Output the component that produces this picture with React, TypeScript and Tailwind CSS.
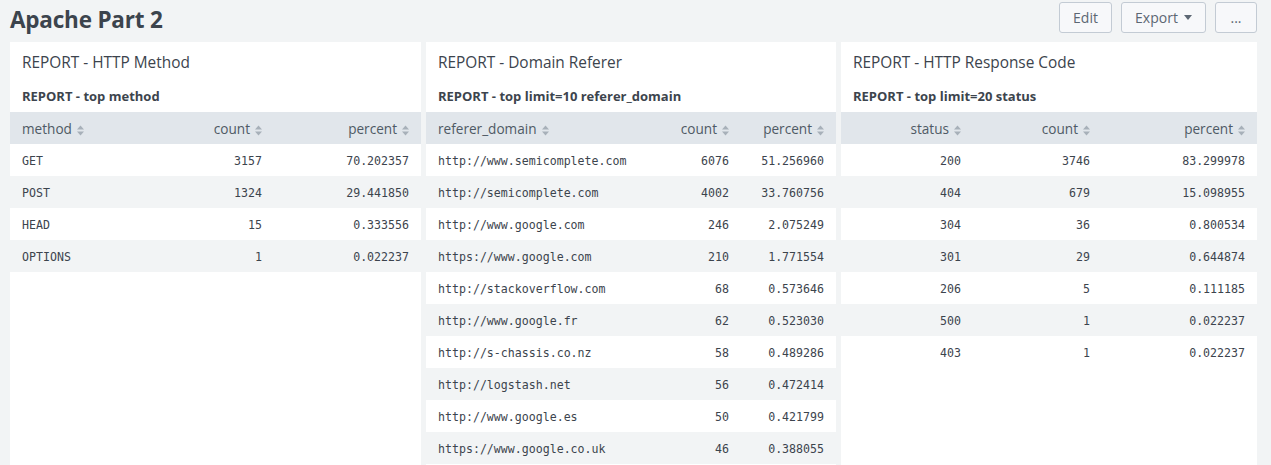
import React from "react";

type Col = { key: string; label: string; align: "left" | "right"; width: string };
type Panel = { title: string; search: string; width: string; cols: Col[]; rows: string[][] };

const panels: Panel[] = [
  {
    title: "REPORT - HTTP Method",
    search: "REPORT - top method",
    width: "w-[411px]",
    cols: [
      { key: "method", label: "method", align: "left", width: "w-[136px]" },
      { key: "count", label: "count", align: "right", width: "w-[128px]" },
      { key: "percent", label: "percent", align: "right", width: "w-auto" },
    ],
    rows: [
      ["GET", "3157", "70.202357"],
      ["POST", "1324", "29.441850"],
      ["HEAD", "15", "0.333556"],
      ["OPTIONS", "1", "0.022237"],
    ],
  },
  {
    title: "REPORT - Domain Referer",
    search: "REPORT - top limit=10 referer_domain",
    width: "w-[410px]",
    cols: [
      { key: "referer_domain", label: "referer_domain", align: "left", width: "w-auto" },
      { key: "count", label: "count", align: "right", width: "w-[80px]" },
      { key: "percent", label: "percent", align: "right", width: "w-[95px]" },
    ],
    rows: [
      ["http://www.semicomplete.com", "6076", "51.256960"],
      ["http://semicomplete.com", "4002", "33.760756"],
      ["http://www.google.com", "246", "2.075249"],
      ["https://www.google.com", "210", "1.771554"],
      ["http://stackoverflow.com", "68", "0.573646"],
      ["http://www.google.fr", "62", "0.523030"],
      ["http://s-chassis.co.nz", "58", "0.489286"],
      ["http://logstash.net", "56", "0.472414"],
      ["http://www.google.es", "50", "0.421799"],
      ["https://www.google.co.uk", "46", "0.388055"],
    ],
  },
  {
    title: "REPORT - HTTP Response Code",
    search: "REPORT - top limit=20 status",
    width: "w-[416px]",
    cols: [
      { key: "status", label: "status", align: "right", width: "w-[132px]" },
      { key: "count", label: "count", align: "right", width: "w-[129px]" },
      { key: "percent", label: "percent", align: "right", width: "w-auto" },
    ],
    rows: [
      ["200", "3746", "83.299978"],
      ["404", "679", "15.098955"],
      ["304", "36", "0.800534"],
      ["301", "29", "0.644874"],
      ["206", "5", "0.111185"],
      ["500", "1", "0.022237"],
      ["403", "1", "0.022237"],
    ],
  },
];

const SortIcon = () => (
  <svg width="7" height="11" viewBox="0 0 7 11" className="ml-[5px] inline-block fill-[#a7b0b9]">
    <path d="M3.5 0.5 L7 4.5 L0 4.5 Z" />
    <path d="M0 6.5 L7 6.5 L3.5 10.5 Z" />
  </svg>
);

const ReportPanel = ({ panel }: { panel: Panel }) => (
  <div className={`${panel.width} shrink-0 bg-white`}>
    <div className="px-3 pt-[11px] text-[15.4px] leading-[20px] text-[#3c444d]">{panel.title}</div>
    <div className="px-3 mt-[15px] text-[13px] leading-[16px] font-bold text-[#3c444d]">
      {panel.search}
    </div>
    <table className="mt-[8px] w-full table-fixed border-collapse">
      <colgroup>
        {panel.cols.map((c) => (
          <col key={c.key} className={c.width} />
        ))}
      </colgroup>
      <thead>
        <tr className="h-[32px] bg-[#e1e6eb]">
          {panel.cols.map((c) => (
            <th
              key={c.key}
              className={`px-3 pt-[2px] font-normal text-[13.6px] text-[#4f5a65] whitespace-nowrap ${
                c.align === "right" ? "text-right" : "text-left"
              }`}
            >
              {c.label}
              <SortIcon />
            </th>
          ))}
        </tr>
      </thead>
      <tbody>
        {panel.rows.map((r, i) => (
          <tr key={i} className={`h-[32px] ${i % 2 === 1 ? "bg-[#f2f4f5]" : "bg-white"}`}>
            {r.map((v, j) => (
              <td
                key={j}
                className={`px-3 pt-[4px] font-['DejaVu_Sans_Mono',monospace] text-[11.6px] text-[#3c444d] whitespace-nowrap ${
                  panel.cols[j].align === "right" ? "text-right" : "text-left"
                }`}
              >
                {v}
              </td>
            ))}
          </tr>
        ))}
      </tbody>
    </table>
  </div>
);

export default function App() {
  return (
    <div className="w-[1271px] h-[465px] overflow-hidden bg-[#f2f4f5] font-['Open_Sans',sans-serif]">
      <div className="h-[42px] flex items-start justify-between pl-[10px] pr-[14px]">
        <h1 className="mt-[5px] text-[22.5px] leading-[30px] font-bold text-[#3c444d] tracking-[-0.2px]">
          Apache Part 2
        </h1>
        <div className="flex gap-[9px] mt-[2px]">
          <button className="h-[31px] w-[53px] rounded-[3px] border border-[#c3cbd4] bg-[#f7f8fa] text-[14px] text-[#5c6773]">
            Edit
          </button>
          <button className="h-[31px] w-[85px] rounded-[3px] border border-[#c3cbd4] bg-[#f7f8fa] text-[14px] text-[#5c6773] flex items-center justify-center gap-[6px]">
            Export
            <svg width="8" height="5" viewBox="0 0 8 5" className="fill-[#5c6773]">
              <path d="M0 0 L8 0 L4 5 Z" />
            </svg>
          </button>
          <button className="h-[31px] w-[42px] rounded-[3px] border border-[#c3cbd4] bg-[#f7f8fa] text-[14px] text-[#5c6773]">
            ...
          </button>
        </div>
      </div>
      <div className="flex gap-[5px] pl-[10px] h-[423px] items-stretch">
        {panels.map((p) => (
          <ReportPanel key={p.title} panel={p} />
        ))}
      </div>
    </div>
  );
}
